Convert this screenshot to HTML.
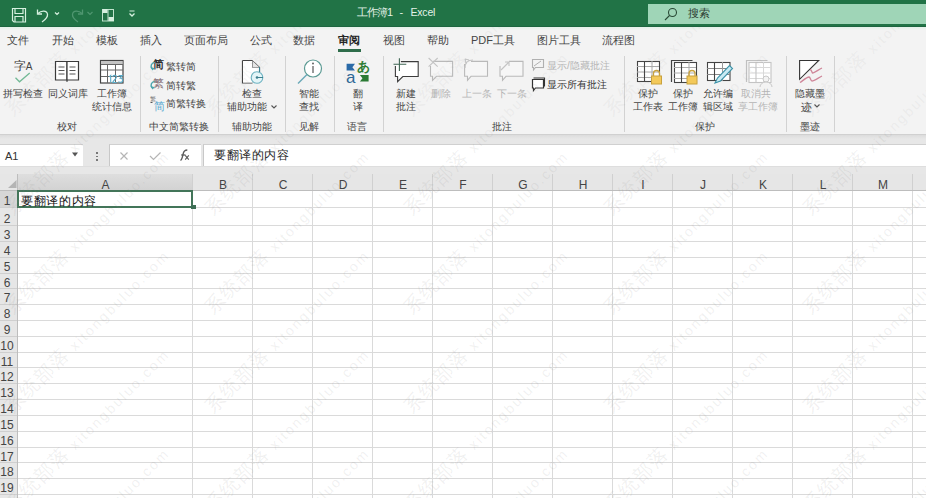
<!DOCTYPE html><html><head><meta charset="utf-8"><style>
html,body{margin:0;padding:0;width:926px;height:498px;overflow:hidden;background:#fff;font-family:"Liberation Sans",sans-serif}
.t{position:absolute;white-space:nowrap;line-height:1}
.c{text-align:center}
.r{position:absolute}
.s{position:absolute;overflow:visible}
.wm{position:absolute;white-space:nowrap;line-height:18px;height:18px;transform-origin:0 100%;transform:rotate(-45deg);color:rgba(140,140,140,0.13);pointer-events:none}
</style></head><body><div class="r" style="left:0px;top:0px;width:926px;height:27px;background:#217346;"></div>
<div class="r" style="left:0px;top:26px;width:926px;height:1px;background:#1d6640;"></div>
<div class="r" style="left:648px;top:4px;width:278px;height:20px;background:#9fd5b7;"></div>
<svg class="s" style="left:10px;top:6px" width="20" height="18" viewBox="0 0 20 18"><g fill="none" stroke="#d6f0df" stroke-width="1.2"><path d="M2.5 2.5h13v13.5h-11.5l-1.5-1.5z"/><path d="M5 2.5v5h8v-5"/><path d="M5 16v-5.5h8v5.5"/></g></svg>
<svg class="s" style="left:34px;top:6px" width="18" height="18" viewBox="0 0 18 18"><g fill="none" stroke="#d6f0df" stroke-width="1.3"><path d="M4 7.5c3-3 9-3.5 9.5 1c0.3 2.5-2 5-5.5 7.5"/><path d="M3.5 3.5v4.5h4.5"/></g></svg>
<svg class="s" style="left:53px;top:10px" width="8" height="6" viewBox="0 0 8 6"><path d="M2 2.5l2 2l2-2" fill="none" stroke="#d6f0df" stroke-width="1.2"/></svg>
<svg class="s" style="left:68px;top:6px" width="18" height="18" viewBox="0 0 18 18"><g fill="none" stroke="#4f9670" stroke-width="1.3"><path d="M14 7.5c-3-3-9-3.5-9.5 1c-0.3 2.5 2 5 5.5 7.5"/><path d="M14.5 3.5v4.5h-4.5"/></g></svg>
<svg class="s" style="left:86px;top:10px" width="8" height="6" viewBox="0 0 8 6"><path d="M1.5 2l2.5 2.5l2.5-2.5" fill="none" stroke="#4f9670" stroke-width="1.2"/></svg>
<svg class="s" style="left:100px;top:7px" width="16" height="16" viewBox="0 0 16 16"><rect x="2.5" y="2.5" width="11" height="11.5" fill="none" stroke="#bfe3cc" stroke-width="1"/><path d="M8 2.5v11.5" stroke="#bfe3cc"/><rect x="2.5" y="2" width="5" height="4" fill="#d6f0df"/><rect x="8.5" y="10" width="5.5" height="4" fill="#d6f0df"/></svg>
<svg class="s" style="left:127px;top:8px" width="10" height="10" viewBox="0 0 10 10"><rect x="2.5" y="2.5" width="5" height="1" fill="#d6f0df"/><path d="M2.5 5.5l2.5 2.5l2.5-2.5" fill="none" stroke="#d6f0df" stroke-width="1.3"/></svg>
<div class="t" style="left:357px;top:6.5px;font-size:11px;color:#e3f2e8;letter-spacing:-1px">工作簿1</div>
<div class="t" style="left:399.5px;top:6.5px;font-size:11px;color:#e3f2e8;">-</div>
<div class="t" style="left:410.5px;top:6.5px;font-size:10.5px;color:#e3f2e8;letter-spacing:-0.2px">Excel</div>
<svg class="s" style="left:662px;top:6px" width="18" height="16" viewBox="0 0 18 16"><g fill="none" stroke="#2a4a36" stroke-width="1.1"><circle cx="10.5" cy="6.5" r="4"/><path d="M7.5 9.5l-4.5 4.5"/></g></svg>
<div class="t" style="left:688px;top:7.5px;font-size:10.5px;color:#2b3b31;">搜索</div>
<div class="r" style="left:0px;top:27px;width:926px;height:107px;background:#f3f3f3;"></div>
<div class="r" style="left:0px;top:27px;width:926px;height:3px;background:linear-gradient(#e2f2e8,#f3f3f3);"></div>
<div class="t" style="left:7px;top:35px;font-size:11px;color:#444;">文件</div>
<div class="t" style="left:52px;top:35px;font-size:11px;color:#444;">开始</div>
<div class="t" style="left:96px;top:35px;font-size:11px;color:#444;">模板</div>
<div class="t" style="left:140px;top:35px;font-size:11px;color:#444;">插入</div>
<div class="t" style="left:184px;top:35px;font-size:11px;color:#444;">页面布局</div>
<div class="t" style="left:250px;top:35px;font-size:11px;color:#444;">公式</div>
<div class="t" style="left:293px;top:35px;font-size:11px;color:#444;">数据</div>
<div class="t" style="left:338px;top:35px;font-size:11px;color:#262626;font-weight:bold">审阅</div>
<div class="t" style="left:383px;top:35px;font-size:11px;color:#444;">视图</div>
<div class="t" style="left:427px;top:35px;font-size:11px;color:#444;">帮助</div>
<div class="t" style="left:471px;top:35px;font-size:11px;color:#444;">PDF工具</div>
<div class="t" style="left:537px;top:35px;font-size:11px;color:#444;">图片工具</div>
<div class="t" style="left:602px;top:35px;font-size:11px;color:#444;">流程图</div>
<div class="r" style="left:338px;top:49px;width:23px;height:3px;background:#2f6d4b;"></div>
<div class="r" style="left:140px;top:56px;width:1px;height:76px;background:#d2d2d2;"></div>
<div class="r" style="left:218px;top:56px;width:1px;height:76px;background:#d2d2d2;"></div>
<div class="r" style="left:285px;top:56px;width:1px;height:76px;background:#d2d2d2;"></div>
<div class="r" style="left:334px;top:56px;width:1px;height:76px;background:#d2d2d2;"></div>
<div class="r" style="left:383px;top:56px;width:1px;height:76px;background:#d2d2d2;"></div>
<div class="r" style="left:624px;top:56px;width:1px;height:76px;background:#d2d2d2;"></div>
<div class="r" style="left:786px;top:56px;width:1px;height:76px;background:#d2d2d2;"></div>
<div class="r" style="left:834px;top:56px;width:1px;height:76px;background:#d2d2d2;"></div>
<div class="r" style="left:0px;top:134px;width:926px;height:1px;background:#d0d0d0;"></div>
<div class="t c" style="left:7px;top:122px;width:120px;font-size:10px;color:#444444">校对</div>
<div class="t c" style="left:119px;top:122px;width:120px;font-size:10px;color:#444444">中文简繁转换</div>
<div class="t c" style="left:192px;top:122px;width:120px;font-size:10px;color:#444444">辅助功能</div>
<div class="t c" style="left:249px;top:122px;width:120px;font-size:10px;color:#444444">见解</div>
<div class="t c" style="left:297px;top:122px;width:120px;font-size:10px;color:#444444">语言</div>
<div class="t c" style="left:442px;top:122px;width:120px;font-size:10px;color:#444444">批注</div>
<div class="t c" style="left:645px;top:122px;width:120px;font-size:10px;color:#444444">保护</div>
<div class="t c" style="left:750px;top:122px;width:120px;font-size:10px;color:#444444">墨迹</div>
<svg class="s" style="left:12px;top:56px" width="26" height="30" viewBox="0 0 26 30"><text x="2" y="14" font-size="12" fill="#333" font-family="Liberation Sans">字</text><text x="13.8" y="13.5" font-size="10" fill="#444" font-family="Liberation Sans">A</text><path d="M3.5 21.8l4 4l10.2-8.7" fill="none" stroke="#72b995" stroke-width="1.3"/></svg>
<div class="t c" style="left:-37px;top:89px;width:120px;font-size:10px;color:#444444">拼写检查</div>
<svg class="s" style="left:53px;top:59px" width="28" height="24" viewBox="0 0 28 24"><g fill="#fff" stroke="#3a3a3a" stroke-width="1.2"><path d="M2.5 2.5h11.5v18.5h-11.5z"/><path d="M14 2.5h11.5v18.5h-11.5z"/></g><g stroke="#555" stroke-width="1"><path d="M5.5 8h6M5.5 11.5h6M5.5 15h6M16.5 8h6M16.5 11.5h6M16.5 15h6"/></g><path d="M13 21.5h2v1h-2z" fill="#3a3a3a"/></svg>
<div class="t c" style="left:8px;top:89px;width:120px;font-size:10px;color:#444444">同义词库</div>
<svg class="s" style="left:99px;top:59px" width="27" height="26" viewBox="0 0 27 26"><rect x="1.5" y="1.5" width="22.5" height="22.5" fill="#fff" stroke="#444" stroke-width="1.2"/><rect x="2" y="2" width="21.5" height="3.5" fill="#c4c4c4"/><path d="M2 5.5h22M2 11h22M2 17.5h22M8.5 5.5v18.5M16.5 5.5v18.5" stroke="#666" stroke-width="1"/><g fill="none" stroke="#5aabc8" stroke-width="1.1"><path d="M10.2 17.8l1.5-1.3v7"/><path d="M13.6 18c0.3-1.2 1.2-1.6 2-1.6c1.2 0 1.9 0.7 1.9 1.7c0 1.8-3.5 3.4-3.8 5.4h4"/><path d="M19.6 16.6h3.8l-2.2 2.6c1.5 0 2.4 0.8 2.4 2c0 1.3-1 2.2-2.2 2.2c-0.8 0-1.5-0.3-1.9-0.9"/></g></svg>
<div class="t c" style="left:52px;top:89px;width:120px;font-size:10px;color:#444444">工作簿</div>
<div class="t c" style="left:52px;top:101.5px;width:120px;font-size:10px;color:#444444">统计信息</div>
<svg class="s" style="left:148px;top:57px" width="18" height="16" viewBox="0 0 18 16"><text x="5" y="11" font-size="10.5" font-weight="bold" fill="#2e2e2e" font-family="Liberation Sans">简</text><path d="M6.5 5.5c-3 0.5-4.5 3.5-2.5 6" fill="none" stroke="#49a5ad" stroke-width="1.4"/><path d="M2.5 10.5l2 3l2.5-2.5z" fill="#49a5ad"/></svg>
<svg class="s" style="left:148px;top:76px" width="18" height="16" viewBox="0 0 18 16"><text x="5" y="11" font-size="10.5" font-weight="normal" fill="#806a72" font-family="Liberation Sans">繁</text><path d="M6.5 5.5c-3 0.5-4.5 3.5-2.5 6" fill="none" stroke="#49a5ad" stroke-width="1.4"/><path d="M2.5 10.5l2 3l2.5-2.5z" fill="#49a5ad"/></svg>
<svg class="s" style="left:148px;top:95px" width="18" height="16" viewBox="0 0 18 16"><text x="5.5" y="14.5" font-size="10.5" fill="#5aa8d0" font-family="Liberation Sans">简</text><text x="2" y="5.5" font-size="5.5" fill="#777" font-family="Liberation Sans">繁</text><path d="M2.5 7.5h2" stroke="#555"/></svg>
<div class="t" style="left:166px;top:62px;font-size:10px;color:#444444;">繁转简</div>
<div class="t" style="left:166px;top:80.5px;font-size:10px;color:#444444;">简转繁</div>
<div class="t" style="left:166px;top:99px;font-size:10px;color:#444444;">简繁转换</div>
<svg class="s" style="left:240px;top:58px" width="28" height="28" viewBox="0 0 28 28"><path d="M2.5 2.5h9.5l7.5 7v5" fill="#fff" stroke="#444" stroke-width="1.2"/><path d="M2.5 2.5v22.5h10" fill="none" stroke="#444" stroke-width="1.2"/><path d="M12 2.5v7h7.5" fill="#e6e6e6" stroke="#444" stroke-width="1"/><rect x="3" y="3" width="9" height="21.5" fill="#fff"/><rect x="3" y="9.5" width="16" height="10" fill="#fff"/><circle cx="17" cy="19.5" r="5.8" fill="#e4f5f8" stroke="#6db3c2" stroke-width="1.1"/><path d="M17 19.5h6M19.5 9v5" stroke="#3d7f8e" stroke-width="1.1"/><circle cx="17" cy="19.5" r="1.3" fill="#3d7f8e"/></svg>
<div class="t c" style="left:192px;top:89px;width:120px;font-size:10px;color:#444444">检查</div>
<div class="t c" style="left:186.5px;top:101.5px;width:120px;font-size:10px;color:#444444">辅助功能</div>
<svg class="s" style="left:269.5px;top:103.5px" width="8" height="6" viewBox="0 0 8 6"><path d="M1.5 1.5l2.5 2.5l2.5-2.5" fill="none" stroke="#555" stroke-width="1.1"/></svg>
<svg class="s" style="left:296px;top:58px" width="26" height="27" viewBox="0 0 26 27"><circle cx="17" cy="10.5" r="8.5" fill="#fff" stroke="#5b9a93" stroke-width="1.2"/><path d="M11 16.5l-9 9" stroke="#6aa9b8" stroke-width="1.4"/><path d="M17 8v7" stroke="#555" stroke-width="1.2"/><circle cx="17" cy="5.5" r="0.9" fill="#555"/></svg>
<div class="t c" style="left:249px;top:89px;width:120px;font-size:10px;color:#444444">智能</div>
<div class="t c" style="left:249px;top:101.5px;width:120px;font-size:10px;color:#444444">查找</div>
<svg class="s" style="left:340px;top:56px" width="34" height="30" viewBox="0 0 34 30"><path d="M6.6 7.8h8.4l-2.6 3.4l2.6 3.3h-8.4z" fill="#2a6aa8"/><text x="6" y="26.5" font-size="17" fill="#2d6796" font-family="Liberation Sans">a</text><text x="17" y="14.5" font-size="13" fill="#2e7d32" font-weight="bold" font-family="Liberation Sans">あ</text><path d="M19.9 19h8.7v6.6h-8.7l2.6-3.3z" fill="#2b7a34"/></svg>
<div class="t c" style="left:298px;top:89px;width:120px;font-size:10px;color:#444444">翻</div>
<div class="t c" style="left:298px;top:101.5px;width:120px;font-size:10px;color:#444444">译</div>
<svg class="s" style="left:388px;top:54px" width="36" height="32" viewBox="0 0 36 32"><path d="M12.9 7.6H30.2V22.5H14.8L9.6 27.6V22.5H7.4V11.9" fill="#fff" stroke="#3c3c3c" stroke-width="1.1"/><path d="M7.9 12V22h2v-0.5" fill="none"/><path d="M11.4 4.2V17M5.5 10.3H18.3" stroke="#3f6653" stroke-width="1.1"/></svg>
<div class="t c" style="left:346px;top:89px;width:120px;font-size:10px;color:#444444">新建</div>
<div class="t c" style="left:346px;top:101.5px;width:120px;font-size:10px;color:#444444">批注</div>
<svg class="s" style="left:424px;top:54px" width="34" height="32" viewBox="0 0 34 32"><path d="M9 7.4H28.6V22.3H12.5L8.5 26.3V22.3H6.5V12" fill="#f6f6f6" stroke="#b9b9b9" stroke-width="1.1"/><path d="M4.6 4L13.7 12.6M13.7 4L4.6 12.6" stroke="#c4c4c4" stroke-width="1.1"/></svg>
<div class="t c" style="left:381px;top:89px;width:120px;font-size:10px;color:#b5b5b5">删除</div>
<svg class="s" style="left:459px;top:54px" width="34" height="32" viewBox="0 0 34 32"><path d="M12 7.4H28.5V22.3H12L8.5 26.3V22.3H5.6V10" fill="#f6f6f6" stroke="#b9b9b9" stroke-width="1.1"/><path d="M6 14c0-5 3-8 8-8M6 5l1 4M6 5l4 1" fill="none" stroke="#c4c4c4" stroke-width="1.1"/></svg>
<div class="t c" style="left:417px;top:89px;width:120px;font-size:10px;color:#b5b5b5">上一条</div>
<svg class="s" style="left:494px;top:54px" width="34" height="32" viewBox="0 0 34 32"><path d="M15 7.4H29V22.3H12L8.5 26.3V22.3H6V12" fill="#f6f6f6" stroke="#b9b9b9" stroke-width="1.1"/><path d="M7 16l8-8M11 8h4v4" fill="none" stroke="#c4c4c4" stroke-width="1.1"/></svg>
<div class="t c" style="left:452px;top:89px;width:120px;font-size:10px;color:#b5b5b5">下一条</div>
<svg class="s" style="left:530px;top:57px" width="16" height="14" viewBox="0 0 16 14"><path d="M2.5 2.5h11v8h-8l-2 2.5v-2.5h-1z" fill="none" stroke="#b0b0b0" stroke-width="1.1"/><path d="M4 9l7-5" stroke="#b0b0b0" stroke-width="1"/></svg>
<div class="t" style="left:547px;top:61px;font-size:10px;color:#b5b5b5;">显示/隐藏批注</div>
<svg class="s" style="left:530px;top:76px" width="16" height="15" viewBox="0 0 16 15"><path d="M3.5 2h11v8.5" fill="none" stroke="#333" stroke-width="1.1"/><path d="M2.5 3.5h11v8.5h-8l-2 2.5v-2.5h-1z" fill="#fff" stroke="#333" stroke-width="1.2"/></svg>
<div class="t" style="left:547px;top:79.5px;font-size:10px;color:#333;">显示所有批注</div>
<svg class="s" style="left:634px;top:58px" width="30" height="28" viewBox="0 0 30 28"><rect x="3.5" y="3.5" width="22" height="20" fill="#fff" stroke="#444" stroke-width="1.1"/><path d="M3 8.5h22M3 14h22M3 19.5h22" stroke="#aaa" stroke-width="1"/><path d="M10.5 3v20.5" stroke="#444" stroke-width="1.1"/><path d="M18 3v20.5" stroke="#aaa" stroke-width="1"/><path d="M19.5 18v-2.5a3 3 0 0 1 6 0v2.5" fill="none" stroke="#c9a23e" stroke-width="1.3"/><rect x="17.5" y="18" width="10" height="8" fill="#f3c95a" stroke="#c9a23e" stroke-width="1"/></svg>
<div class="t c" style="left:588px;top:89px;width:120px;font-size:10px;color:#444444">保护</div>
<div class="t c" style="left:588px;top:101.5px;width:120px;font-size:10px;color:#444444">工作表</div>
<svg class="s" style="left:669px;top:58px" width="30" height="28" viewBox="0 0 30 28"><path d="M2.5 24v-21.5h21" fill="none" stroke="#444" stroke-width="1.2"/><rect x="5.5" y="4.5" width="22" height="20" fill="#fff" stroke="#444" stroke-width="1.1"/><path d="M5 9.5h22M5 15h22M5 20.5h22" stroke="#aaa" stroke-width="1"/><path d="M12.5 4v20.5" stroke="#444" stroke-width="1.1"/><path d="M20 4v20.5" stroke="#aaa" stroke-width="1"/><path d="M20.0 18v-2.5a3 3 0 0 1 6 0v2.5" fill="none" stroke="#c9a23e" stroke-width="1.3"/><rect x="18.0" y="18" width="10" height="8" fill="#f3c95a" stroke="#c9a23e" stroke-width="1"/></svg>
<div class="t c" style="left:623px;top:89px;width:120px;font-size:10px;color:#444444">保护</div>
<div class="t c" style="left:623px;top:101.5px;width:120px;font-size:10px;color:#444444">工作簿</div>
<svg class="s" style="left:704px;top:58px" width="30" height="28" viewBox="0 0 30 28"><rect x="3.5" y="4.5" width="22.5" height="18" fill="#fff" stroke="#444" stroke-width="1.1"/><path d="M3 10.5h23M3 16.5h23" stroke="#888"/><path d="M10.5 4v19" stroke="#444" stroke-width="1.1"/><path d="M18.5 4v19" stroke="#999"/><path d="M11 25l2.5-5l12-12.5l3 3l-12 12.5z" fill="#c9eaf3" stroke="#3d93a8" stroke-width="1.1"/></svg>
<div class="t c" style="left:658px;top:89px;width:120px;font-size:10px;color:#444444">允许编</div>
<div class="t c" style="left:658px;top:101.5px;width:120px;font-size:10px;color:#444444">辑区域</div>
<svg class="s" style="left:744px;top:58px" width="30" height="30" viewBox="0 0 30 30"><path d="M2.5 24v-21.5h21" fill="none" stroke="#c0c0c0" stroke-width="1.2"/><rect x="5.0" y="4.5" width="22" height="20" fill="#fff" stroke="#c4c4c4" stroke-width="1.1"/><path d="M4.5 9.5h22M4.5 15h22M4.5 20.5h22" stroke="#d8d8d8" stroke-width="1"/><path d="M12.0 4v20.5" stroke="#c4c4c4" stroke-width="1.1"/><path d="M19.5 4v20.5" stroke="#d8d8d8" stroke-width="1"/><circle cx="22" cy="21" r="3" fill="#f3f3f3" stroke="#c8c8c8"/><path d="M16 29a6 5 0 0 1 12 0" fill="#f3f3f3" stroke="#c8c8c8"/></svg>
<div class="t c" style="left:696px;top:89px;width:120px;font-size:10px;color:#b5b5b5">取消共</div>
<div class="t c" style="left:698px;top:101.5px;width:120px;font-size:10px;color:#b5b5b5">享工作簿</div>
<svg class="s" style="left:796px;top:57px" width="30" height="30" viewBox="0 0 30 30"><path d="M3.6 3.5h19.1l-19.1 18.8z" fill="#fff" stroke="#333" stroke-width="1.1"/><path d="M14 12.5c1.5 0 2.2 3.5 2.5 3.5c2 0 6-3.5 9.5-5M4 25.5c3-2 7-5.5 9-5.5c1.5 0 1.5 4 3 4c2 0 6-3 10-5" fill="none" stroke="#cf8598" stroke-width="1.3"/></svg>
<div class="t c" style="left:750px;top:89px;width:120px;font-size:10px;color:#444444">隐藏墨</div>
<div class="t" style="left:801px;top:101.5px;font-size:10.5px;color:#444444;">迹</div>
<svg class="s" style="left:813px;top:103px" width="8" height="6" viewBox="0 0 8 6"><path d="M1.5 1.5l2.5 2.5l2.5-2.5" fill="none" stroke="#555" stroke-width="1.1"/></svg>
<div class="r" style="left:0px;top:135px;width:926px;height:41px;background:#e7e7e7;"></div>
<div class="r" style="left:0px;top:135px;width:926px;height:4px;background:linear-gradient(#dcdcdc,#e7e7e7);"></div>
<div class="r" style="left:0px;top:144px;width:83px;height:23px;background:#fff;border-top:1px solid #d0d0d0;box-sizing:border-box"></div>
<div class="t" style="left:5px;top:151px;font-size:11px;color:#333;">A1</div>
<svg class="s" style="left:71px;top:151px" width="9" height="7" viewBox="0 0 9 7"><path d="M1 1.5h6l-3 4z" fill="#555"/></svg>
<div class="r" style="left:96px;top:152px;width:1.5px;height:1.5px;background:#777;"></div>
<div class="r" style="left:96px;top:155.5px;width:1.5px;height:1.5px;background:#777;"></div>
<div class="r" style="left:96px;top:159px;width:1.5px;height:1.5px;background:#777;"></div>
<div class="r" style="left:109px;top:144px;width:92px;height:23px;background:#fff;border-left:1px solid #c8c8c8;border-top:1px solid #d0d0d0;box-sizing:border-box"></div>
<svg class="s" style="left:118px;top:150px" width="12" height="12" viewBox="0 0 12 12"><path d="M2.5 2.5l7 7M9.5 2.5l-7 7" stroke="#b5b5b5" stroke-width="1.2"/></svg>
<svg class="s" style="left:148px;top:150px" width="14" height="12" viewBox="0 0 14 12"><path d="M2 6l3.5 3.5l7-7" fill="none" stroke="#b5b5b5" stroke-width="1.2"/></svg>
<svg class="s" style="left:176px;top:147px" width="18" height="18" viewBox="0 0 18 18"><g fill="none" stroke="#5a5a5a" stroke-width="1.3"><path d="M4.5 13.5c1.5-1 2-3.5 2.6-6.5c0.6-3 1.5-4 4.2-4"/><path d="M5.2 8h4.3"/><path d="M9.2 8.3l3.6 4.3M12.8 8.3l-3.6 4.3" stroke-width="1.1"/></g></svg>
<div class="r" style="left:203px;top:144px;width:723px;height:23px;background:#fff;border-left:1px solid #c8c8c8;border-top:1px solid #d0d0d0;box-sizing:border-box"></div>
<div class="r" style="left:0px;top:166px;width:926px;height:1px;background:#dedede;"></div>
<div class="t" style="left:214px;top:148.5px;font-size:12px;color:#262626;letter-spacing:0.6px">要翻译的内容</div>
<div class="r" style="left:0px;top:174px;width:926px;height:17px;background:#e6e6e6;"></div>
<div class="r" style="left:0px;top:191px;width:18px;height:307px;background:#e6e6e6;"></div>
<div class="r" style="left:18px;top:191px;width:908px;height:307px;background:#ffffff;"></div>
<div class="r" style="left:18px;top:174px;width:175px;height:17px;background:linear-gradient(#dedede,#d2d2d2);"></div>
<div class="r" style="left:0px;top:191px;width:18px;height:16px;background:#d6d6d6;"></div>
<div class="r" style="left:192px;top:191px;width:1px;height:307px;background:#dadada;"></div>
<div class="r" style="left:192px;top:174px;width:1px;height:17px;background:#d0d0d0;"></div>
<div class="r" style="left:252px;top:191px;width:1px;height:307px;background:#dadada;"></div>
<div class="r" style="left:252px;top:174px;width:1px;height:17px;background:#d0d0d0;"></div>
<div class="r" style="left:312px;top:191px;width:1px;height:307px;background:#dadada;"></div>
<div class="r" style="left:312px;top:174px;width:1px;height:17px;background:#d0d0d0;"></div>
<div class="r" style="left:372px;top:191px;width:1px;height:307px;background:#dadada;"></div>
<div class="r" style="left:372px;top:174px;width:1px;height:17px;background:#d0d0d0;"></div>
<div class="r" style="left:432px;top:191px;width:1px;height:307px;background:#dadada;"></div>
<div class="r" style="left:432px;top:174px;width:1px;height:17px;background:#d0d0d0;"></div>
<div class="r" style="left:492px;top:191px;width:1px;height:307px;background:#dadada;"></div>
<div class="r" style="left:492px;top:174px;width:1px;height:17px;background:#d0d0d0;"></div>
<div class="r" style="left:552px;top:191px;width:1px;height:307px;background:#dadada;"></div>
<div class="r" style="left:552px;top:174px;width:1px;height:17px;background:#d0d0d0;"></div>
<div class="r" style="left:612px;top:191px;width:1px;height:307px;background:#dadada;"></div>
<div class="r" style="left:612px;top:174px;width:1px;height:17px;background:#d0d0d0;"></div>
<div class="r" style="left:672px;top:191px;width:1px;height:307px;background:#dadada;"></div>
<div class="r" style="left:672px;top:174px;width:1px;height:17px;background:#d0d0d0;"></div>
<div class="r" style="left:732px;top:191px;width:1px;height:307px;background:#dadada;"></div>
<div class="r" style="left:732px;top:174px;width:1px;height:17px;background:#d0d0d0;"></div>
<div class="r" style="left:792px;top:191px;width:1px;height:307px;background:#dadada;"></div>
<div class="r" style="left:792px;top:174px;width:1px;height:17px;background:#d0d0d0;"></div>
<div class="r" style="left:852px;top:191px;width:1px;height:307px;background:#dadada;"></div>
<div class="r" style="left:852px;top:174px;width:1px;height:17px;background:#d0d0d0;"></div>
<div class="r" style="left:912px;top:191px;width:1px;height:307px;background:#dadada;"></div>
<div class="r" style="left:912px;top:174px;width:1px;height:17px;background:#d0d0d0;"></div>
<div class="r" style="left:972px;top:191px;width:1px;height:307px;background:#dadada;"></div>
<div class="r" style="left:972px;top:174px;width:1px;height:17px;background:#d0d0d0;"></div>
<div class="r" style="left:18px;top:207px;width:908px;height:1px;background:#dadada;"></div>
<div class="r" style="left:0px;top:207px;width:18px;height:1px;background:#cfcfcf;"></div>
<div class="r" style="left:18px;top:225px;width:908px;height:1px;background:#dadada;"></div>
<div class="r" style="left:0px;top:225px;width:18px;height:1px;background:#cfcfcf;"></div>
<div class="r" style="left:18px;top:241px;width:908px;height:1px;background:#dadada;"></div>
<div class="r" style="left:0px;top:241px;width:18px;height:1px;background:#cfcfcf;"></div>
<div class="r" style="left:18px;top:257px;width:908px;height:1px;background:#dadada;"></div>
<div class="r" style="left:0px;top:257px;width:18px;height:1px;background:#cfcfcf;"></div>
<div class="r" style="left:18px;top:273px;width:908px;height:1px;background:#dadada;"></div>
<div class="r" style="left:0px;top:273px;width:18px;height:1px;background:#cfcfcf;"></div>
<div class="r" style="left:18px;top:288px;width:908px;height:1px;background:#dadada;"></div>
<div class="r" style="left:0px;top:288px;width:18px;height:1px;background:#cfcfcf;"></div>
<div class="r" style="left:18px;top:304px;width:908px;height:1px;background:#dadada;"></div>
<div class="r" style="left:0px;top:304px;width:18px;height:1px;background:#cfcfcf;"></div>
<div class="r" style="left:18px;top:320px;width:908px;height:1px;background:#dadada;"></div>
<div class="r" style="left:0px;top:320px;width:18px;height:1px;background:#cfcfcf;"></div>
<div class="r" style="left:18px;top:336px;width:908px;height:1px;background:#dadada;"></div>
<div class="r" style="left:0px;top:336px;width:18px;height:1px;background:#cfcfcf;"></div>
<div class="r" style="left:18px;top:352px;width:908px;height:1px;background:#dadada;"></div>
<div class="r" style="left:0px;top:352px;width:18px;height:1px;background:#cfcfcf;"></div>
<div class="r" style="left:18px;top:367px;width:908px;height:1px;background:#dadada;"></div>
<div class="r" style="left:0px;top:367px;width:18px;height:1px;background:#cfcfcf;"></div>
<div class="r" style="left:18px;top:383px;width:908px;height:1px;background:#dadada;"></div>
<div class="r" style="left:0px;top:383px;width:18px;height:1px;background:#cfcfcf;"></div>
<div class="r" style="left:18px;top:399px;width:908px;height:1px;background:#dadada;"></div>
<div class="r" style="left:0px;top:399px;width:18px;height:1px;background:#cfcfcf;"></div>
<div class="r" style="left:18px;top:415px;width:908px;height:1px;background:#dadada;"></div>
<div class="r" style="left:0px;top:415px;width:18px;height:1px;background:#cfcfcf;"></div>
<div class="r" style="left:18px;top:431px;width:908px;height:1px;background:#dadada;"></div>
<div class="r" style="left:0px;top:431px;width:18px;height:1px;background:#cfcfcf;"></div>
<div class="r" style="left:18px;top:447px;width:908px;height:1px;background:#dadada;"></div>
<div class="r" style="left:0px;top:447px;width:18px;height:1px;background:#cfcfcf;"></div>
<div class="r" style="left:18px;top:462px;width:908px;height:1px;background:#dadada;"></div>
<div class="r" style="left:0px;top:462px;width:18px;height:1px;background:#cfcfcf;"></div>
<div class="r" style="left:18px;top:478px;width:908px;height:1px;background:#dadada;"></div>
<div class="r" style="left:0px;top:478px;width:18px;height:1px;background:#cfcfcf;"></div>
<div class="r" style="left:18px;top:494px;width:908px;height:1px;background:#dadada;"></div>
<div class="r" style="left:0px;top:494px;width:18px;height:1px;background:#cfcfcf;"></div>
<div class="r" style="left:18px;top:510px;width:908px;height:1px;background:#dadada;"></div>
<div class="r" style="left:0px;top:510px;width:18px;height:1px;background:#cfcfcf;"></div>
<div class="r" style="left:17px;top:174px;width:1px;height:324px;background:#bdbdbd;"></div>
<div class="r" style="left:0px;top:190px;width:926px;height:1px;background:#bdbdbd;"></div>
<svg class="s" style="left:0px;top:174px" width="18" height="17" viewBox="0 0 18 17"><path d="M16.5 6v8h-8.5z" fill="#b4b4b4"/></svg>
<div class="t c" style="left:18px;top:178.5px;width:175px;font-size:12px;color:#444">A</div>
<div class="t c" style="left:193px;top:178.5px;width:60px;font-size:12px;color:#444">B</div>
<div class="t c" style="left:253px;top:178.5px;width:60px;font-size:12px;color:#444">C</div>
<div class="t c" style="left:313px;top:178.5px;width:60px;font-size:12px;color:#444">D</div>
<div class="t c" style="left:373px;top:178.5px;width:60px;font-size:12px;color:#444">E</div>
<div class="t c" style="left:433px;top:178.5px;width:60px;font-size:12px;color:#444">F</div>
<div class="t c" style="left:493px;top:178.5px;width:60px;font-size:12px;color:#444">G</div>
<div class="t c" style="left:553px;top:178.5px;width:60px;font-size:12px;color:#444">H</div>
<div class="t c" style="left:613px;top:178.5px;width:60px;font-size:12px;color:#444">I</div>
<div class="t c" style="left:673px;top:178.5px;width:60px;font-size:12px;color:#444">J</div>
<div class="t c" style="left:733px;top:178.5px;width:60px;font-size:12px;color:#444">K</div>
<div class="t c" style="left:793px;top:178.5px;width:60px;font-size:12px;color:#444">L</div>
<div class="t c" style="left:853px;top:178.5px;width:60px;font-size:12px;color:#444">M</div>
<div class="t c" style="left:913px;top:178.5px;width:60px;font-size:12px;color:#444">N</div>
<div class="t" style="left:0;top:194.5px;width:14px;text-align:center;font-size:12px;color:#444">1</div>
<div class="t" style="left:0;top:213.0px;width:14px;text-align:center;font-size:12px;color:#444">2</div>
<div class="t" style="left:0;top:229.0px;width:14px;text-align:center;font-size:12px;color:#444">3</div>
<div class="t" style="left:0;top:245.0px;width:14px;text-align:center;font-size:12px;color:#444">4</div>
<div class="t" style="left:0;top:261.0px;width:14px;text-align:center;font-size:12px;color:#444">5</div>
<div class="t" style="left:0;top:276.5px;width:14px;text-align:center;font-size:12px;color:#444">6</div>
<div class="t" style="left:0;top:292.0px;width:14px;text-align:center;font-size:12px;color:#444">7</div>
<div class="t" style="left:0;top:308.0px;width:14px;text-align:center;font-size:12px;color:#444">8</div>
<div class="t" style="left:0;top:324.0px;width:14px;text-align:center;font-size:12px;color:#444">9</div>
<div class="t" style="left:0;top:340.0px;width:14px;text-align:center;font-size:12px;color:#444">10</div>
<div class="t" style="left:0;top:355.5px;width:14px;text-align:center;font-size:12px;color:#444">11</div>
<div class="t" style="left:0;top:371.0px;width:14px;text-align:center;font-size:12px;color:#444">12</div>
<div class="t" style="left:0;top:387.0px;width:14px;text-align:center;font-size:12px;color:#444">13</div>
<div class="t" style="left:0;top:403.0px;width:14px;text-align:center;font-size:12px;color:#444">14</div>
<div class="t" style="left:0;top:419.0px;width:14px;text-align:center;font-size:12px;color:#444">15</div>
<div class="t" style="left:0;top:435.0px;width:14px;text-align:center;font-size:12px;color:#444">16</div>
<div class="t" style="left:0;top:450.5px;width:14px;text-align:center;font-size:12px;color:#444">17</div>
<div class="t" style="left:0;top:466.0px;width:14px;text-align:center;font-size:12px;color:#444">18</div>
<div class="t" style="left:0;top:482.0px;width:14px;text-align:center;font-size:12px;color:#444">19</div>
<div class="r" style="left:17px;top:190px;width:176px;height:18px;background:transparent;border:2px solid #437559;box-sizing:border-box"></div>
<div class="r" style="left:191px;top:204.5px;width:4.5px;height:4.5px;background:#3d6e55;"></div>
<div class="t" style="left:21px;top:194.5px;font-size:12px;color:#111;letter-spacing:0.7px">要翻译的内容</div>
<div style="position:absolute;left:0;top:27px;width:926px;height:107px;overflow:hidden;opacity:0.6"><div style="position:absolute;left:0;top:-27px;width:926px;height:498px">
<div class="wm" style="left:15.0px;top:101.0px"><span style="font-size:19px;letter-spacing:1.5px">系统部落</span><span style="font-size:14px;letter-spacing:2.2px"> xitongbuluo.com</span></div>
<div class="wm" style="left:15.0px;top:200.0px"><span style="font-size:19px;letter-spacing:1.5px">系统部落</span><span style="font-size:14px;letter-spacing:2.2px"> xitongbuluo.com</span></div>
<div class="wm" style="left:214.5px;top:101.0px"><span style="font-size:19px;letter-spacing:1.5px">系统部落</span><span style="font-size:14px;letter-spacing:2.2px"> xitongbuluo.com</span></div>
<div class="wm" style="left:214.5px;top:200.0px"><span style="font-size:19px;letter-spacing:1.5px">系统部落</span><span style="font-size:14px;letter-spacing:2.2px"> xitongbuluo.com</span></div>
<div class="wm" style="left:414.0px;top:101.0px"><span style="font-size:19px;letter-spacing:1.5px">系统部落</span><span style="font-size:14px;letter-spacing:2.2px"> xitongbuluo.com</span></div>
<div class="wm" style="left:414.0px;top:200.0px"><span style="font-size:19px;letter-spacing:1.5px">系统部落</span><span style="font-size:14px;letter-spacing:2.2px"> xitongbuluo.com</span></div>
<div class="wm" style="left:613.5px;top:101.0px"><span style="font-size:19px;letter-spacing:1.5px">系统部落</span><span style="font-size:14px;letter-spacing:2.2px"> xitongbuluo.com</span></div>
<div class="wm" style="left:613.5px;top:200.0px"><span style="font-size:19px;letter-spacing:1.5px">系统部落</span><span style="font-size:14px;letter-spacing:2.2px"> xitongbuluo.com</span></div>
<div class="wm" style="left:813.0px;top:101.0px"><span style="font-size:19px;letter-spacing:1.5px">系统部落</span><span style="font-size:14px;letter-spacing:2.2px"> xitongbuluo.com</span></div>
<div class="wm" style="left:813.0px;top:200.0px"><span style="font-size:19px;letter-spacing:1.5px">系统部落</span><span style="font-size:14px;letter-spacing:2.2px"> xitongbuluo.com</span></div>
</div></div>
<div style="position:absolute;left:0;top:134px;width:926px;height:364px;overflow:hidden;opacity:1"><div style="position:absolute;left:0;top:-134px;width:926px;height:498px">
<div class="wm" style="left:15.0px;top:200.0px"><span style="font-size:19px;letter-spacing:1.5px">系统部落</span><span style="font-size:14px;letter-spacing:2.2px"> xitongbuluo.com</span></div>
<div class="wm" style="left:15.0px;top:299.0px"><span style="font-size:19px;letter-spacing:1.5px">系统部落</span><span style="font-size:14px;letter-spacing:2.2px"> xitongbuluo.com</span></div>
<div class="wm" style="left:15.0px;top:398.0px"><span style="font-size:19px;letter-spacing:1.5px">系统部落</span><span style="font-size:14px;letter-spacing:2.2px"> xitongbuluo.com</span></div>
<div class="wm" style="left:15.0px;top:497.0px"><span style="font-size:19px;letter-spacing:1.5px">系统部落</span><span style="font-size:14px;letter-spacing:2.2px"> xitongbuluo.com</span></div>
<div class="wm" style="left:15.0px;top:596.0px"><span style="font-size:19px;letter-spacing:1.5px">系统部落</span><span style="font-size:14px;letter-spacing:2.2px"> xitongbuluo.com</span></div>
<div class="wm" style="left:214.5px;top:200.0px"><span style="font-size:19px;letter-spacing:1.5px">系统部落</span><span style="font-size:14px;letter-spacing:2.2px"> xitongbuluo.com</span></div>
<div class="wm" style="left:214.5px;top:299.0px"><span style="font-size:19px;letter-spacing:1.5px">系统部落</span><span style="font-size:14px;letter-spacing:2.2px"> xitongbuluo.com</span></div>
<div class="wm" style="left:214.5px;top:398.0px"><span style="font-size:19px;letter-spacing:1.5px">系统部落</span><span style="font-size:14px;letter-spacing:2.2px"> xitongbuluo.com</span></div>
<div class="wm" style="left:214.5px;top:497.0px"><span style="font-size:19px;letter-spacing:1.5px">系统部落</span><span style="font-size:14px;letter-spacing:2.2px"> xitongbuluo.com</span></div>
<div class="wm" style="left:214.5px;top:596.0px"><span style="font-size:19px;letter-spacing:1.5px">系统部落</span><span style="font-size:14px;letter-spacing:2.2px"> xitongbuluo.com</span></div>
<div class="wm" style="left:414.0px;top:200.0px"><span style="font-size:19px;letter-spacing:1.5px">系统部落</span><span style="font-size:14px;letter-spacing:2.2px"> xitongbuluo.com</span></div>
<div class="wm" style="left:414.0px;top:299.0px"><span style="font-size:19px;letter-spacing:1.5px">系统部落</span><span style="font-size:14px;letter-spacing:2.2px"> xitongbuluo.com</span></div>
<div class="wm" style="left:414.0px;top:398.0px"><span style="font-size:19px;letter-spacing:1.5px">系统部落</span><span style="font-size:14px;letter-spacing:2.2px"> xitongbuluo.com</span></div>
<div class="wm" style="left:414.0px;top:497.0px"><span style="font-size:19px;letter-spacing:1.5px">系统部落</span><span style="font-size:14px;letter-spacing:2.2px"> xitongbuluo.com</span></div>
<div class="wm" style="left:414.0px;top:596.0px"><span style="font-size:19px;letter-spacing:1.5px">系统部落</span><span style="font-size:14px;letter-spacing:2.2px"> xitongbuluo.com</span></div>
<div class="wm" style="left:613.5px;top:200.0px"><span style="font-size:19px;letter-spacing:1.5px">系统部落</span><span style="font-size:14px;letter-spacing:2.2px"> xitongbuluo.com</span></div>
<div class="wm" style="left:613.5px;top:299.0px"><span style="font-size:19px;letter-spacing:1.5px">系统部落</span><span style="font-size:14px;letter-spacing:2.2px"> xitongbuluo.com</span></div>
<div class="wm" style="left:613.5px;top:398.0px"><span style="font-size:19px;letter-spacing:1.5px">系统部落</span><span style="font-size:14px;letter-spacing:2.2px"> xitongbuluo.com</span></div>
<div class="wm" style="left:613.5px;top:497.0px"><span style="font-size:19px;letter-spacing:1.5px">系统部落</span><span style="font-size:14px;letter-spacing:2.2px"> xitongbuluo.com</span></div>
<div class="wm" style="left:613.5px;top:596.0px"><span style="font-size:19px;letter-spacing:1.5px">系统部落</span><span style="font-size:14px;letter-spacing:2.2px"> xitongbuluo.com</span></div>
<div class="wm" style="left:813.0px;top:200.0px"><span style="font-size:19px;letter-spacing:1.5px">系统部落</span><span style="font-size:14px;letter-spacing:2.2px"> xitongbuluo.com</span></div>
<div class="wm" style="left:813.0px;top:299.0px"><span style="font-size:19px;letter-spacing:1.5px">系统部落</span><span style="font-size:14px;letter-spacing:2.2px"> xitongbuluo.com</span></div>
<div class="wm" style="left:813.0px;top:398.0px"><span style="font-size:19px;letter-spacing:1.5px">系统部落</span><span style="font-size:14px;letter-spacing:2.2px"> xitongbuluo.com</span></div>
<div class="wm" style="left:813.0px;top:497.0px"><span style="font-size:19px;letter-spacing:1.5px">系统部落</span><span style="font-size:14px;letter-spacing:2.2px"> xitongbuluo.com</span></div>
<div class="wm" style="left:813.0px;top:596.0px"><span style="font-size:19px;letter-spacing:1.5px">系统部落</span><span style="font-size:14px;letter-spacing:2.2px"> xitongbuluo.com</span></div>
</div></div></body></html>
